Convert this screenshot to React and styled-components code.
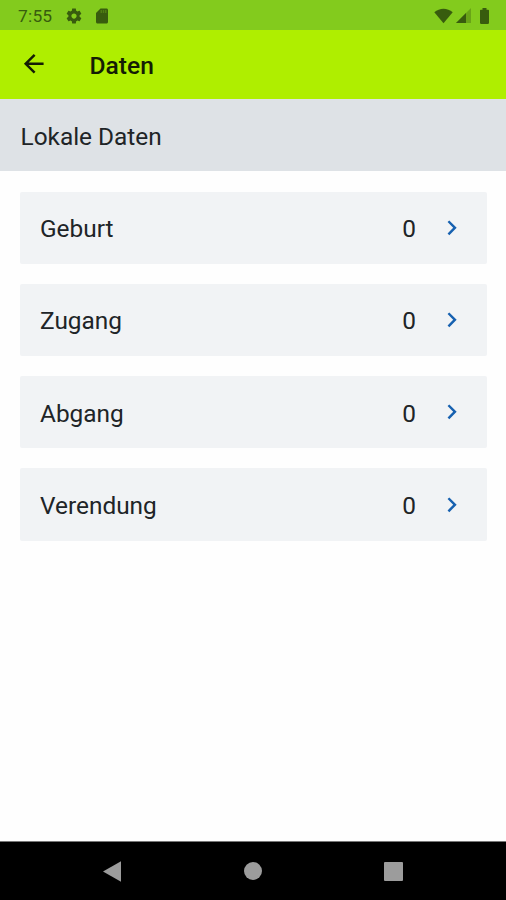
import React from "react";
import styled, { createGlobalStyle } from "styled-components";

const GlobalStyle = createGlobalStyle`
  * { box-sizing: border-box; }
  body { margin: 0; background: #fefefe; }
`;

const Screen = styled.div`
  display: flex;
  flex-direction: column;
  width: 506px;
  height: 900px;
  overflow: hidden;
  background: #fefefe;
  color: #202427;
  font-family: Roboto, "Noto Sans", sans-serif;
`;

const StatusBar = styled.div`
  display: flex;
  justify-content: space-between;
  align-items: center;
  height: 30px;
  flex: none;
  padding: 1px 12px 0 18px;
  background: #83cb1d;
  color: #385c0e;
`;

const StatusGroup = styled.div`
  display: flex;
  align-items: center;
  gap: ${(p) => p.$gap}px;
`;

const Clock = styled.span`
  width: 39px;
  font-size: 17.4px;
  line-height: 20px;
  letter-spacing: 0.2px;
`;

const Icon = styled.svg`
  display: block;
  flex: none;
  width: ${(p) => p.$w}px;
  height: ${(p) => p.$h}px;
  fill: currentColor;
`;

const AppBar = styled.header`
  display: flex;
  align-items: center;
  gap: 41px;
  height: 68.5px;
  flex: none;
  padding: 0 19px;
  background: #afee00;
  color: #141d04;
`;

const BackButton = styled.button`
  display: flex;
  margin-top: -1px;
  padding: 0;
  border: 0;
  background: none;
  color: inherit;
`;

const Title = styled.h1`
  margin: 3px 0 0;
  font-size: 24.6px;
  font-weight: 500;
  line-height: 30px;
`;

const SectionHeader = styled.h2`
  display: flex;
  align-items: center;
  height: 72.5px;
  flex: none;
  margin: 0;
  padding: 3px 20.5px 0;
  background: #dee2e6;
  font-size: 24.4px;
  font-weight: 400;
`;

const List = styled.main`
  display: flex;
  flex: 1;
  flex-direction: column;
  gap: 19.7px;
  padding: 20.5px 19px 0 20px;
`;

const Row = styled.div`
  display: flex;
  align-items: center;
  height: 72.5px;
  padding: 0 21px 0 20px;
  border-radius: 2px;
  background: #f1f3f5;
  font-size: 24.4px;
`;

const Label = styled.span`
  flex: 1;
  padding-top: 2px;
`;

const Count = styled.span`
  padding-top: 2px;
  margin-right: 20.5px;
`;

const Chevron = styled(Icon)`
  color: #1761b0;
`;

const NavBar = styled.nav`
  display: grid;
  grid-template-columns: repeat(3, 140.5px);
  justify-content: center;
  align-items: center;
  justify-items: center;
  height: 59px;
  flex: none;
  border-top: 1px solid #777;
  background: #000;
  color: #9c9c9c;
`;

const rows = [
  { label: "Geburt", count: 0 },
  { label: "Zugang", count: 0 },
  { label: "Abgang", count: 0 },
  { label: "Verendung", count: 0 },
];

export default function App() {
  return (
    <Screen>
      <GlobalStyle />
      <StatusBar>
        <StatusGroup $gap={8}>
          <Clock>7:55</Clock>
          <StatusGroup $gap={9.5}>
            <Icon $w={18} $h={18} viewBox="0 0 24 24">
              <path d="M19.43 12.98c.04-.32.07-.64.07-.98s-.03-.66-.07-.98l2.11-1.65c.19-.15.24-.42.12-.64l-2-3.46c-.12-.22-.39-.3-.61-.22l-2.49 1c-.52-.4-1.08-.73-1.69-.98l-.38-2.65C14.46 2.18 14.25 2 14 2h-4c-.25 0-.46.18-.49.42l-.38 2.65c-.61.25-1.17.59-1.69.98l-2.49-1c-.23-.09-.49 0-.61.22l-2 3.46c-.13.22-.07.49.12.64l2.11 1.65c-.04.32-.07.65-.07.98s.03.66.07.98l-2.11 1.65c-.19.15-.24.42-.12.64l2 3.46c.12.22.39.3.61.22l2.49-1c.52.4 1.08.73 1.69.98l.38 2.65c.03.24.24.42.49.42h4c.25 0 .46-.18.49-.42l.38-2.65c.61-.25 1.17-.59 1.69-.98l2.49 1c.23.09.49 0 .61-.22l2-3.46c.12-.22.07-.49-.12-.64l-2.11-1.65zM12 15.5c-1.93 0-3.5-1.57-3.5-3.5s1.57-3.5 3.5-3.5 3.500 1.570 3.500 3.500-1.570 3.500-3.500 3.500z" />
            </Icon>
            <Icon $w={18} $h={18} viewBox="0 0 24 24">
              <path d="M18 2h-8L4.020 8 4 20c0 1.100.9 2 2 2h12c1.100 0 2-.9 2-2V4c0-1.100-.9-2-2-2z" />
              <path
                d="M10 4h2v4h-2zM13 4h2v4h-2zM16 4h2v4h-2z"
                fill="#83cb1d"
                opacity=".3"
              />
            </Icon>
          </StatusGroup>
        </StatusGroup>
        <StatusGroup $gap={3}>
          <Icon $w={19} $h={16} viewBox="0 0 19 16">
            <path d="M.3 4.300C5.500-.4 13.500-.4 18.700 4.300L9.500 15.300Z" />
          </Icon>
          <Icon $w={15} $h={15} viewBox="0 0 15 15">
            <path d="M0 15 15 0v15Z" opacity=".35" />
            <path d="M0 15 10 5v10Z" />
          </Icon>
          <Icon $w={20} $h={18} viewBox="2 0 20 18">
            <path d="M10.500 1h4v1.700h1.700q.8 0 .8.800v12.200q0 1.300-1.300 1.300H9.300Q8 17 8 15.700V3.500q0-.8.800-.8h1.700Z" />
          </Icon>
        </StatusGroup>
      </StatusBar>
      <AppBar>
        <BackButton aria-label="Zurück">
          <Icon $w={29.5} $h={29.5} viewBox="0 0 24 24">
            <path d="M20 11H7.830l5.590-5.590L12 4l-8 8 8 8 1.410-1.410L7.830 13H20v-2z" />
          </Icon>
        </BackButton>
        <Title>Daten</Title>
      </AppBar>
      <SectionHeader>Lokale Daten</SectionHeader>
      <List>
        {rows.map((row) => (
          <Row key={row.label}>
            <Label>{row.label}</Label>
            <Count>{row.count}</Count>
            <Chevron $w={29.5} $h={29.5} viewBox="0 0 24 24">
              <path d="M10 6 8.590 7.410 13.170 12l-4.580 4.590L10 18l6-6z" />
            </Chevron>
          </Row>
        ))}
      </List>
      <NavBar>
        <Icon $w={20} $h={21} viewBox="0 0 20 21">
          <path d="M0 10.500 18 .3v20.400Z" />
        </Icon>
        <Icon $w={18} $h={18} viewBox="0 0 18 18">
          <circle cx="9" cy="9" r="9" />
        </Icon>
        <Icon $w={19} $h={19} viewBox="0 0 19 19">
          <rect width="19" height="19" rx="1" />
        </Icon>
      </NavBar>
    </Screen>
  );
}
